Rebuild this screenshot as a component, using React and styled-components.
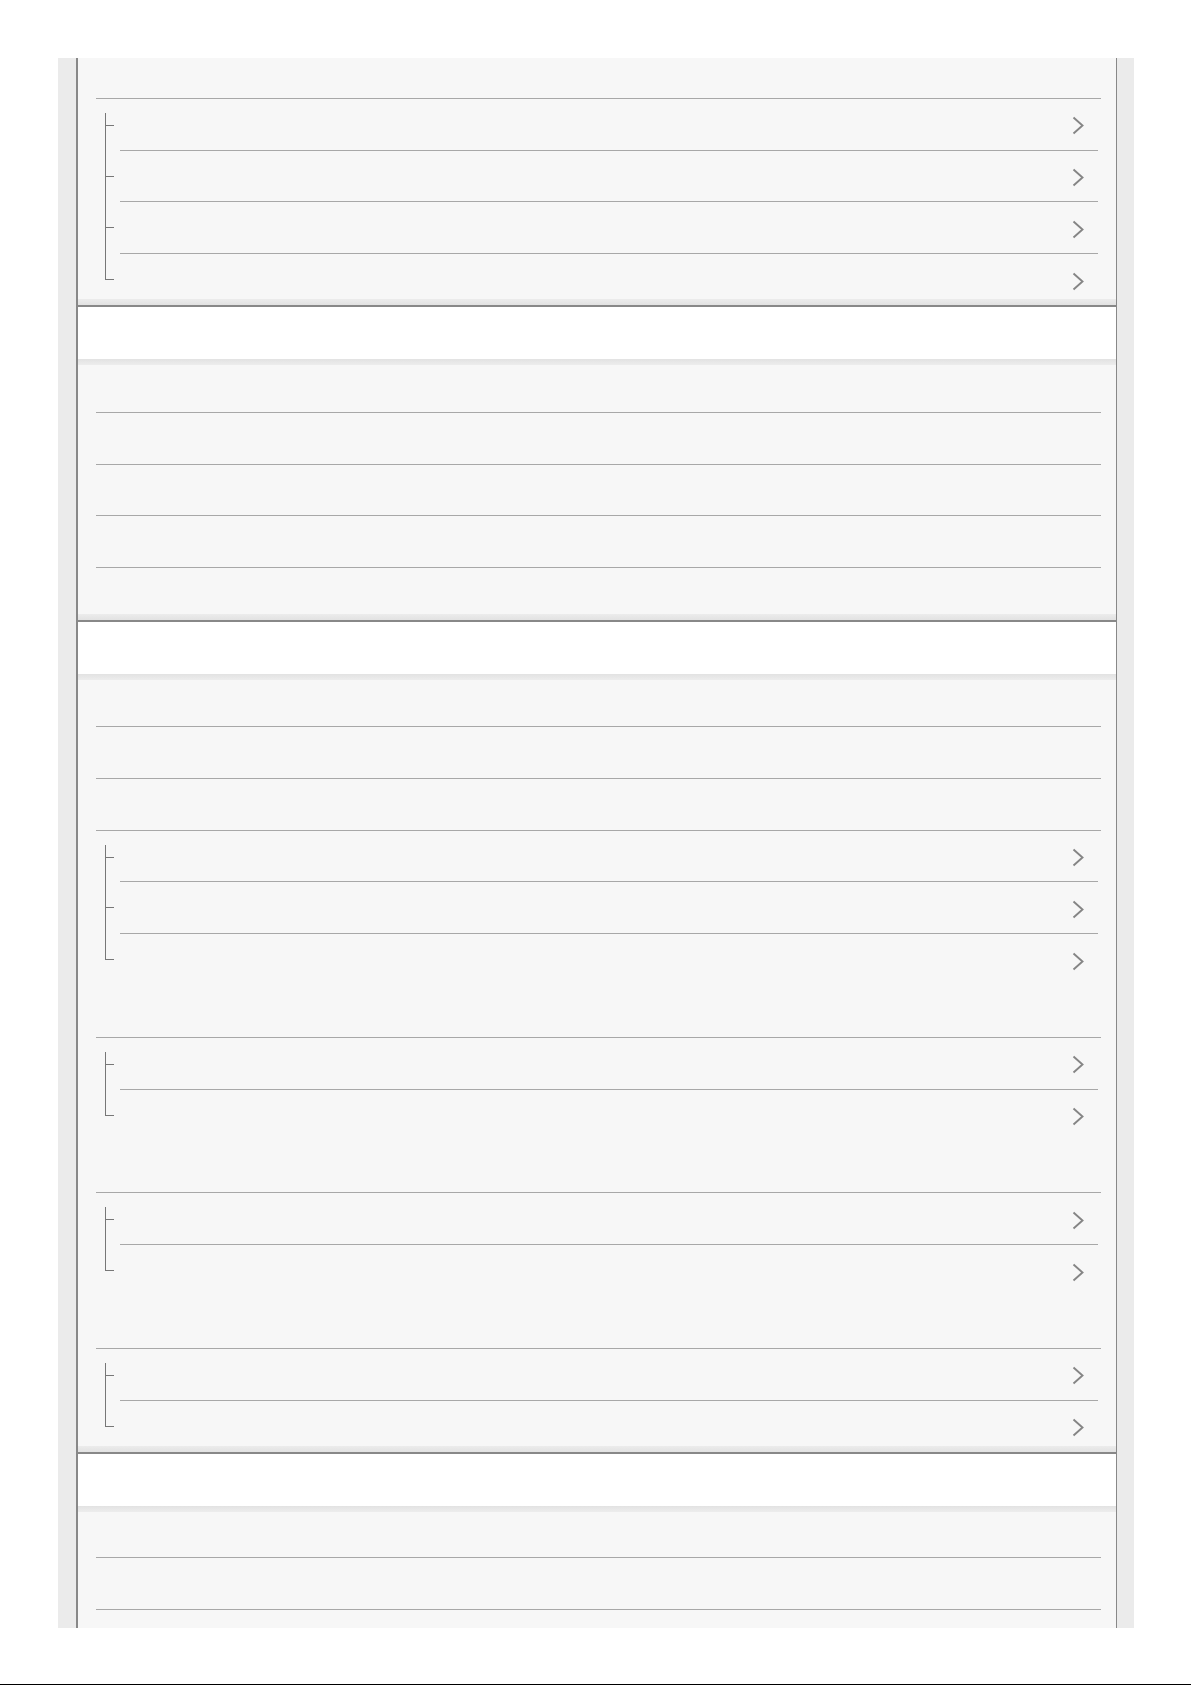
import React from 'react'
import styled, { createGlobalStyle } from 'styled-components'

// one list row, in px (the page is drawn at 1.08x of a 48px row)
const ROW = 51.84
const LINE = '#a8a8a8'
const RAIL = '#777777'

const GlobalStyle = createGlobalStyle`
  html, body {
    margin: 0;
    padding: 0;
    background: #fff;
  }
  body {
    font-family: "Liberation Sans", Arial, sans-serif;
  }
`

const Page = styled.div`
  width: 1191px;
  padding-top: 58px;
`

const Frame = styled.div`
  width: 1076px;
  height: 1570px;
  margin-left: 58px;
  padding: 0 17px 0 18px;
  box-sizing: border-box;
  background: #ebebeb;
  overflow: hidden;
`

const Panel = styled.div`
  min-height: 100%;
  border-left: 2px solid #888;
  border-right: 1px solid #888;
  background: #f7f7f7;
`

const BottomRule = styled.div`
  margin-top: 56px;
  height: 1px;
  background: #000;
`

const Header = styled.header`
  height: 54px;
  box-sizing: border-box;
  border-top: 2px solid #888;
  background: #fff;
`

const topBar = 'linear-gradient(#e2e2e2, #ededed) top / 100% 6px no-repeat'
const bottomBar = 'linear-gradient(#ececec, #e2e2e2) bottom / 100% 6px no-repeat'

const Body = styled.div`
  padding: ${p => p.$padTop || 0}px 15px ${p => p.$padBottom || 0}px 18px;
  background: ${p => [p.$top && topBar, p.$bottom && bottomBar, '#f7f7f7'].filter(Boolean).join(', ')};
`

const Row = styled.div`
  height: ${p => p.$h || ROW}px;
  box-sizing: border-box;
  border-top: ${p => (p.$divider ? `1px solid ${LINE}` : 'none')};
`

const SubRow = styled.div`
  display: flex;
  height: ${p => p.$span * ROW}px;
  box-sizing: border-box;
  border-top: ${p => (p.$divider ? `1px solid ${LINE}` : 'none')};
`

const railLine = {
  first: '9px 14px / 1px calc(100% - 14px)',
  mid: '9px 0 / 1px 100%',
  last: '9px 0 / 1px 27px',
}

const Rail = styled.div`
  width: 24px;
  flex-shrink: 0;
  background:
    linear-gradient(${RAIL}, ${RAIL}) 9px 26px / 9px 1px no-repeat,
    linear-gradient(${RAIL}, ${RAIL}) ${p => railLine[p.$pos]} no-repeat;
`

const Cell = styled.div`
  flex: 1;
  display: flex;
  justify-content: flex-end;
  align-items: flex-start;
  margin-right: 3px;
  padding-right: 14px;
  box-sizing: border-box;
  border-top: ${p => (p.$divider ? `1px solid ${LINE}` : 'none')};
`

const Chevron = styled.svg`
  width: 12px;
  height: 19px;
  margin-top: ${p => (p.$under ? 17.5 : 18.5)}px;
  flex-shrink: 0;
`

const Arrow = ({ under }) => (
  <Chevron $under={under} viewBox="0 0 12 19" fill="none">
    <polyline points="1.5,1.5 10.5,9.5 1.5,17.5" stroke="#858585" strokeWidth="1.9" />
  </Chevron>
)

const row = (h) => ({ type: 'row', h })
const group = (...spans) => ({ type: 'group', spans })

const sections = [
  { header: false, top: false, bottom: true, items: [row(39.7), group(1, 1, 1, 1)] },
  { header: true, top: true, bottom: true, padTop: 1, padBottom: 1, items: [row(), row(), row(), row(), row()] },
  {
    header: true,
    top: true,
    bottom: true,
    items: [row(), row(), row(), group(1, 1, 2), group(1, 2), group(1, 2), group(1, 1)],
  },
  { header: true, top: true, bottom: false, items: [row(), row(), row()] },
]

const Group = ({ spans, divider }) => (
  <>
    {spans.map((span, j) => {
      const pos = j === 0 ? 'first' : j === spans.length - 1 ? 'last' : 'mid'
      return (
        <SubRow key={j} $span={span} $divider={j === 0 && divider}>
          <Rail $pos={pos} />
          <Cell $divider={j > 0}>
            <Arrow under={j > 0 || divider} />
          </Cell>
        </SubRow>
      )
    })}
  </>
)

export default function App() {
  return (
    <Page>
      <GlobalStyle />
      <Frame>
        <Panel>
          {sections.map((s, i) => (
            <section key={i}>
              {s.header && <Header />}
              <Body $top={s.top} $bottom={s.bottom} $padTop={s.padTop} $padBottom={s.padBottom}>
                {s.items.map((item, k) =>
                  item.type === 'row' ? (
                    <Row key={k} $h={item.h} $divider={k > 0} />
                  ) : (
                    <Group key={k} spans={item.spans} divider={k > 0} />
                  )
                )}
              </Body>
            </section>
          ))}
        </Panel>
      </Frame>
      <BottomRule />
    </Page>
  )
}
